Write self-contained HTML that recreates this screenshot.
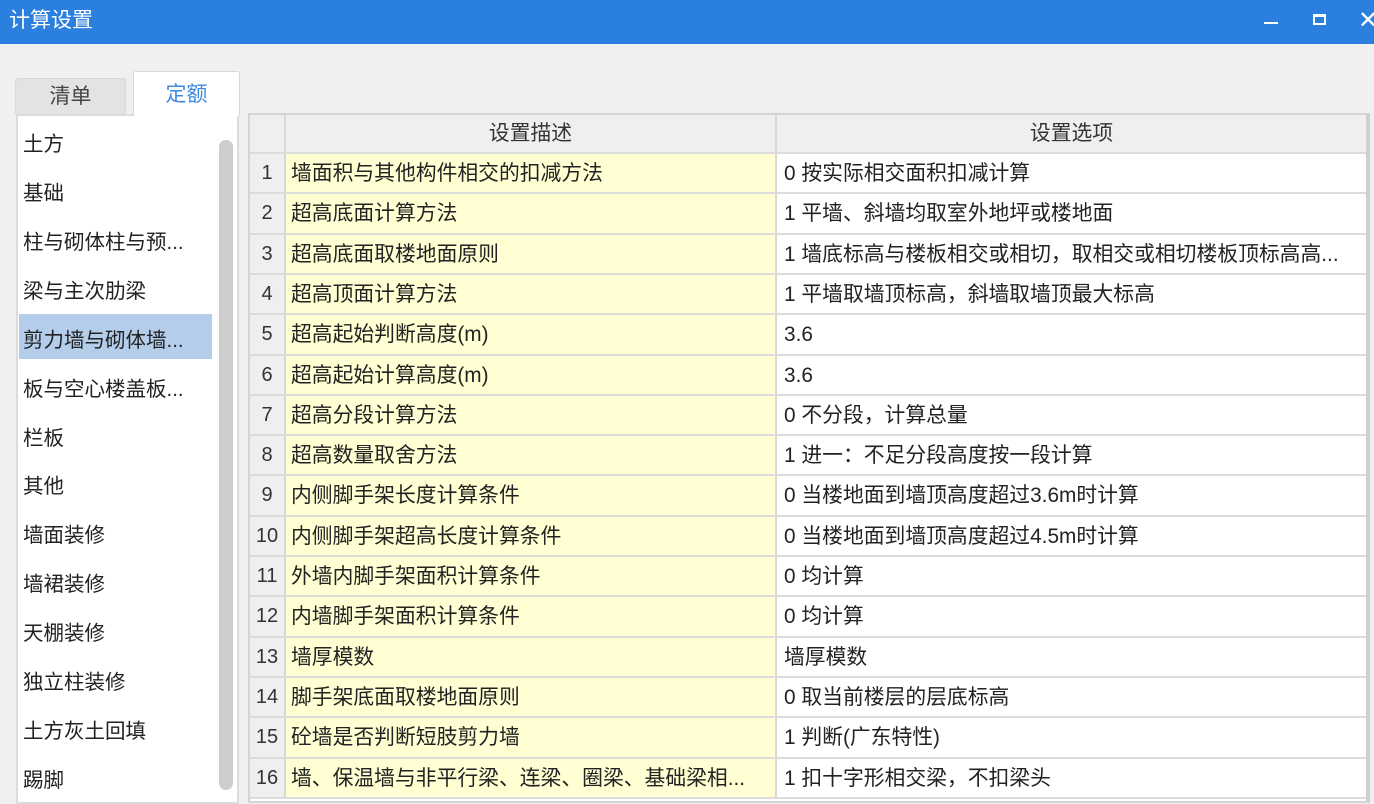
<!DOCTYPE html>
<html><head><meta charset="utf-8"><style>
*{margin:0;padding:0;box-sizing:border-box}
body{width:1374px;height:801px;overflow:hidden;background:#f0f0f0;font-family:"Liberation Sans","Noto Sans CJK SC",sans-serif;font-size:20px;color:#222;position:relative}
.title{position:absolute;left:0;top:0;width:1374px;height:44px;background:#2b7fde;color:#fff;font-size:21px;line-height:42px;padding-left:9px}
.abs{position:absolute}
.tab{position:absolute;text-align:center;font-size:21px;border:1px solid #d8d8d8;border-bottom:none;border-radius:3px 3px 0 0}
.list{position:absolute;left:16px;top:114px;width:223px;height:690px;background:#fff;border:2px solid #dcdcdc}
.item{position:absolute;left:5px;font-size:20.5px}
.sb{position:absolute;left:219px;top:140px;width:14px;height:650px;background:#cdcdcd;border-radius:7px}
.grid{position:absolute;left:248px;top:113px;width:1122px;height:690px;background:#fff;border:2px solid #d4d4d4;border-right:4px solid #cfcfcf}
.row{position:absolute;left:0;width:1116px;height:40px;border-bottom:2px solid #dcdcdc}
.n{position:absolute;left:0;top:0;width:36px;height:100%;background:#efefef;border-right:2px solid #d9d9d9;text-align:center;line-height:39px;color:#333}
.d{position:absolute;left:36px;top:0;width:491px;height:100%;background:#ffffd3;border-right:2px solid #d9d9d9;line-height:39px;padding-left:5px;font-size:20.8px;white-space:nowrap}
.o{position:absolute;left:527px;top:0;right:0;height:100%;line-height:39px;padding-left:7px;background:#fff;font-size:20.8px;white-space:nowrap}
.t{height:41px}
</style></head><body>
<div class="title">计算设置</div>
<div class="abs" style="left:1264px;top:22px;width:14px;height:2px;background:#fff"></div>
<div class="abs" style="left:1313px;top:14px;width:13px;height:11px;border:2px solid #fff;border-top-width:3px"></div>
<div class="abs" style="left:1358px;top:6px;color:#fff;font-size:24px">✕</div>
<div class="tab" style="left:15px;top:78px;width:111px;height:36px;background:#e3e3e3;line-height:36px;color:#444">清单</div>
<div class="tab" style="left:133px;top:71px;width:107px;height:45px;background:#fff;line-height:46px;color:#3d8ae0;z-index:2">定额</div>
<div class="list">
<div class="abs" style="left:1px;top:198px;width:193px;height:45px;background:#b4cdeb"></div>
<div class="item" style="top:11px">土方</div>
<div class="item" style="top:60px">基础</div>
<div class="item" style="top:109px">柱与砌体柱与预...</div>
<div class="item" style="top:158px">梁与主次肋梁</div>
<div class="item" style="top:207px">剪力墙与砌体墙...</div>
<div class="item" style="top:256px">板与空心楼盖板...</div>
<div class="item" style="top:305px">栏板</div>
<div class="item" style="top:353px">其他</div>
<div class="item" style="top:402px">墙面装修</div>
<div class="item" style="top:451px">墙裙装修</div>
<div class="item" style="top:500px">天棚装修</div>
<div class="item" style="top:549px">独立柱装修</div>
<div class="item" style="top:598px">土方灰土回填</div>
<div class="item" style="top:647px">踢脚</div>
</div>
<div class="sb"></div>
<div class="grid">
<div class="row" style="top:0;height:39px"><div class="n" style="line-height:37px"></div><div class="d" style="background:#efefef;text-align:center;line-height:37px;padding:0;color:#333">设置描述</div><div class="o" style="background:#efefef;text-align:center;line-height:37px;padding:0;color:#333">设置选项</div></div>
<div class="row" style="top:39px"><div class="n">1</div><div class="d">墙面积与其他构件相交的扣减方法</div><div class="o">0 按实际相交面积扣减计算</div></div>
<div class="row t" style="top:79px"><div class="n">2</div><div class="d">超高底面计算方法</div><div class="o">1 平墙、斜墙均取室外地坪或楼地面</div></div>
<div class="row" style="top:120px"><div class="n">3</div><div class="d">超高底面取楼地面原则</div><div class="o">1 墙底标高与楼板相交或相切，取相交或相切楼板顶标高高...</div></div>
<div class="row" style="top:160px"><div class="n">4</div><div class="d">超高顶面计算方法</div><div class="o">1 平墙取墙顶标高，斜墙取墙顶最大标高</div></div>
<div class="row t" style="top:200px"><div class="n">5</div><div class="d">超高起始判断高度(m)</div><div class="o">3.6</div></div>
<div class="row" style="top:241px"><div class="n">6</div><div class="d">超高起始计算高度(m)</div><div class="o">3.6</div></div>
<div class="row" style="top:281px"><div class="n">7</div><div class="d">超高分段计算方法</div><div class="o">0 不分段，计算总量</div></div>
<div class="row" style="top:321px"><div class="n">8</div><div class="d">超高数量取舍方法</div><div class="o">1 进一：不足分段高度按一段计算</div></div>
<div class="row t" style="top:361px"><div class="n">9</div><div class="d">内侧脚手架长度计算条件</div><div class="o">0 当楼地面到墙顶高度超过3.6m时计算</div></div>
<div class="row" style="top:402px"><div class="n">10</div><div class="d">内侧脚手架超高长度计算条件</div><div class="o">0 当楼地面到墙顶高度超过4.5m时计算</div></div>
<div class="row" style="top:442px"><div class="n">11</div><div class="d">外墙内脚手架面积计算条件</div><div class="o">0 均计算</div></div>
<div class="row t" style="top:482px"><div class="n">12</div><div class="d">内墙脚手架面积计算条件</div><div class="o">0 均计算</div></div>
<div class="row" style="top:523px"><div class="n">13</div><div class="d">墙厚模数</div><div class="o">墙厚模数</div></div>
<div class="row" style="top:563px"><div class="n">14</div><div class="d">脚手架底面取楼地面原则</div><div class="o">0 取当前楼层的层底标高</div></div>
<div class="row t" style="top:603px"><div class="n">15</div><div class="d">砼墙是否判断短肢剪力墙</div><div class="o">1 判断(广东特性)</div></div>
<div class="row" style="top:644px"><div class="n">16</div><div class="d">墙、保温墙与非平行梁、连梁、圈梁、基础梁相...</div><div class="o">1 扣十字形相交梁，不扣梁头</div></div>
</div>
</body></html>
